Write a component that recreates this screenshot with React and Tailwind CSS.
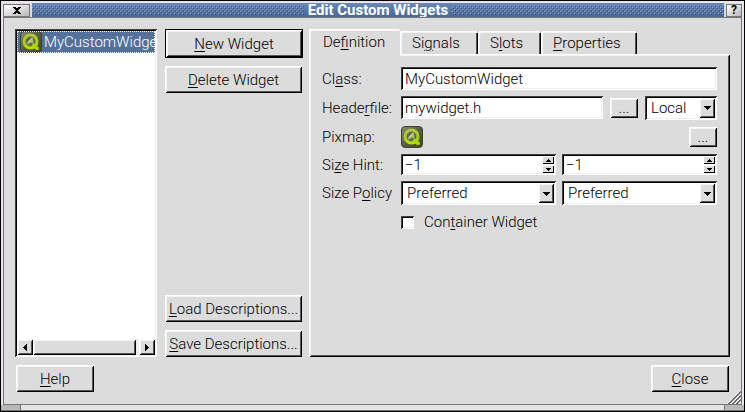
import React from "react";

const raised =
  "bg-[#dcdcdc] shadow-[inset_1px_1px_0_#ffffff,inset_-1px_-1px_0_#000000,inset_2px_2px_0_#f4f4f4,inset_-2px_-2px_0_#555555]";
const sunken =
  "bg-white shadow-[inset_1px_1px_0_#404040,inset_-1px_-1px_0_#ffffff,inset_2px_2px_0_#000000,inset_-2px_-2px_0_#f0f0f0]";

function Key({ text }) {
  const [before, key, after] = text.split("_");
  return (
    <span className="whitespace-pre">
      {before}
      <span className="underline underline-offset-2 decoration-1">{key}</span>
      {after}
    </span>
  );
}

function PushButton({ text, className = "" }) {
  return (
    <button type="button" className={`flex h-[27px] items-center justify-center ${raised} ${className}`}>
      <Key text={text} />
    </button>
  );
}

function DotsButton({ label }) {
  return (
    <button type="button" aria-label={label} className={`h-5 w-7 shrink-0 leading-5 ${raised}`}>
      ...
    </button>
  );
}

function QIcon() {
  return (
    <svg width="22" height="22" viewBox="0 0 22 22" className="shrink-0" aria-hidden="true">
      <defs>
        <linearGradient id="case" x1="0" y1="0" x2="1" y2="1">
          <stop offset="0" stopColor="#8a8a78" />
          <stop offset="0.5" stopColor="#5a5c44" />
          <stop offset="1" stopColor="#3f4818" />
        </linearGradient>
        <linearGradient id="lime" x1="0" y1="0" x2="0" y2="1">
          <stop offset="0" stopColor="#b4c83c" />
          <stop offset="0.6" stopColor="#a8d000" />
          <stop offset="1" stopColor="#b8e000" />
        </linearGradient>
      </defs>
      <rect x="0.5" y="0.5" width="21" height="21" rx="3.5" fill="url(#case)" stroke="#3f4230" />
      <circle cx="10.5" cy="10.5" r="6.5" fill="#66695a" stroke="url(#lime)" strokeWidth="3" />
      <path d="M13 12 L19 16.5 L18.5 19 L16 19 L12 15 Z" fill="#acd800" />
      <path d="M12.5 6 L13.5 12.5 L11 11.5 L7.5 13.5 L7 12 Z" fill="#a9c46a" />
      <path d="M12 7 L8 11.5" stroke="#d4e2b4" strokeWidth="1" />
    </svg>
  );
}

function Arrow({ dir }) {
  const shapes = {
    up: "M3 0h1v1h1v1h1v1H1V2h1V1h1z",
    down: "M0 0h7v1H6v1H5v1H4v1H3V3H2V2H1V1H0z",
    smallDown: "M1 0h5v1H5v1H4v1H3V2H2V1H1z",
    left: "M4 0v7H3V6H2V5H1V4H0V3h1V2h1V1h1V0z",
    right: "M0 0v7h1V6h1V5h1V4h1V3H3V2H2V1H1V0z",
  };
  const sideways = dir === "left" || dir === "right";
  return (
    <svg width="7" height="7" viewBox={sideways ? "-1 0 7 7" : "0 -2 7 7"} shapeRendering="crispEdges" className="shrink-0" aria-hidden="true">
      <path d={shapes[dir]} />
    </svg>
  );
}

function Combo({ id, value, label, className }) {
  return (
    <div className={`relative h-6 ${sunken} ${className}`}>
      <select id={id} aria-label={label} defaultValue={value} className="h-full w-full appearance-none bg-transparent pl-1.5 pr-5 outline-none">
        <option>{value}</option>
      </select>
      <span className={`pointer-events-none absolute inset-y-0.5 right-0.5 flex w-4 items-center justify-center ${raised}`}>
        <Arrow dir="down" />
      </span>
    </div>
  );
}

function Spin({ id, label }) {
  const step = "flex h-2 items-center justify-center bg-[#dcdcdc] shadow-[inset_1px_1px_0_#ffffff,inset_-1px_-1px_0_#000000]";
  return (
    <div className={`flex h-[21px] min-w-0 flex-1 p-0.5 ${sunken}`}>
      <input id={id} aria-label={label} type="text" defaultValue="−1" className="w-0 min-w-0 flex-1 bg-transparent pl-0.5 outline-none" />
      <div className="flex w-3 flex-col gap-px">
        <button type="button" aria-label="Increase" className={step}>
          <Arrow dir="up" />
        </button>
        <button type="button" aria-label="Decrease" className={step}>
          <Arrow dir="smallDown" />
        </button>
      </div>
    </div>
  );
}

function Texture({ id }) {
  return (
    <svg className="h-full w-0 flex-1" shapeRendering="crispEdges" aria-hidden="true">
      <defs>
        <pattern id={id} width="4" height="4" patternUnits="userSpaceOnUse">
          <rect x="0" y="0" width="1" height="1" fill="#86a4cf" />
          <rect x="1" y="1" width="1" height="1" fill="#38517a" />
          <rect x="2" y="2" width="1" height="1" fill="#86a4cf" />
          <rect x="3" y="3" width="1" height="1" fill="#38517a" />
        </pattern>
      </defs>
      <rect y="2" width="100%" height="10" fill={`url(#${id})`} />
    </svg>
  );
}

function TitleBar() {
  const cap = "flex h-[13px] items-center justify-center bg-linear-to-br from-white to-[#b8b8b8] border border-[#777777]";
  return (
    <header className="flex h-3.5 items-center gap-0.5">
      <button type="button" aria-label="Close window" className={`w-[27px] ${cap}`}>
        <svg width="8" height="7" viewBox="0 0 8 7" shapeRendering="crispEdges" aria-hidden="true">
          <path d="M0 0h3v1h2V0h3v1H7v1H6v1H5v1h1v1h1v1h1v1H5V6H3v1H0V6h1V5h1V4h1V3H2V2H1V1H0z" />
        </svg>
      </button>
      <div className="flex h-full flex-1 items-center gap-1 bg-linear-to-b from-[#6688bb] to-[#4a678f]">
        <Texture id="dots-left" />
        <h1 className="text-[15px] leading-[14px] font-bold text-white">Edit Custom Widgets</h1>
        <Texture id="dots-right" />
      </div>
      <button type="button" aria-label="What's this?" className={`w-4 font-bold text-[12px] leading-3 ${cap}`}>
        ?
      </button>
    </header>
  );
}

function WidgetList() {
  return (
    <div className={`flex w-[142px] shrink-0 flex-col p-0.5 ${sunken}`}>
      <ul role="listbox" aria-label="Custom widgets" className="flex-1 overflow-hidden">
        <li role="option" aria-selected="true" className="flex h-[22px] items-center gap-0.5 whitespace-nowrap bg-[#54719c] pl-[3px] text-white outline-1 -outline-offset-1 outline-dotted outline-white">
          <QIcon />
          MyCustomWidget
        </li>
      </ul>
      <div className="flex h-4 bg-[#ededed]">
        <button type="button" aria-label="Scroll left" className={`flex w-4 items-center justify-center ${raised}`}>
          <Arrow dir="left" />
        </button>
        <div className={`mr-[3px] flex-1 ${raised}`} />
        <button type="button" aria-label="Scroll right" className={`flex w-4 items-center justify-center ${raised}`}>
          <Arrow dir="right" />
        </button>
      </div>
    </div>
  );
}

function Tab({ text, active = false, className }) {
  const look = active
    ? "h-[27px] shadow-[inset_1px_1px_0_#ffffff,inset_2px_2px_0_#f4f4f4] z-10 -mb-0.5 pb-0.5"
    : "h-[23px] shadow-[inset_1px_1px_0_#ffffff,inset_2px_2px_0_#f4f4f4,inset_-1px_0_0_#000000,inset_-2px_0_0_#555555]";
  return (
    <button type="button" role="tab" aria-selected={active} className={`relative flex items-center bg-[#dcdcdc] rounded-t-xs ${look} ${className}`}>
      <Key text={text} />
    </button>
  );
}

function Definition() {
  return (
    <form className={`grid flex-1 grid-cols-[auto_minmax(0,1fr)] content-start items-center gap-x-[9px] gap-y-1.5 p-[13px] ${raised}`}>
      <label htmlFor="class"><Key text="Cl_a_ss:" /></label>
      <input id="class" type="text" defaultValue="MyCustomWidget" className={`h-[23px] w-full pl-1 outline-none ${sunken}`} />

      <label htmlFor="header"><Key text="Heade_r_file:" /></label>
      <div className="flex h-[23px] items-center gap-[7px]">
        <input id="header" type="text" defaultValue="mywidget.h" className={`h-full w-0 min-w-0 flex-1 pl-1 outline-none ${sunken}`} />
        <DotsButton label="Choose header file" />
        <Combo id="scope" label="Include scope" value="Local" className="w-[72px] shrink-0" />
      </div>

      <span>Pixmap:</span>
      <div className="flex h-[23px] items-center justify-between">
        <QIcon />
        <DotsButton label="Choose pixmap" />
      </div>

      <label htmlFor="hint-w"><Key text="Si_z_e Hint:" /></label>
      <div className="flex gap-1.5">
        <Spin id="hint-w" />
        <Spin id="hint-h" label="Size hint height" />
      </div>

      <label htmlFor="policy-h"><Key text="Size P_o_licy" /></label>
      <div className="flex gap-1.5">
        <Combo id="policy-h" value="Preferred" className="flex-1" />
        <Combo id="policy-v" label="Vertical size policy" value="Preferred" className="flex-1" />
      </div>

      <label className="col-start-2 flex h-[22px] items-center gap-2.5">
        <input type="checkbox" className={`size-[13px] appearance-none ${sunken}`} />
        <Key text="Con_t_ainer Widget" />
      </label>
    </form>
  );
}

function SizeGrip() {
  return (
    <svg width="14" height="14" viewBox="0 0 14 14" className="absolute right-0 bottom-0" aria-hidden="true">
      <path d="M0 14L14 0M4 14L14 4M8 14L14 8M12 14L14 12" stroke="#ffffff" />
      <path d="M1 14L14 1M2 14L14 2M5 14L14 5M6 14L14 6M9 14L14 9M10 14L14 10" stroke="#666666" />
    </svg>
  );
}

export default function App() {
  return (
    <main className="flex min-h-screen flex-col border border-black bg-[#dcdcdc] font-['Roboto','Liberation_Sans',sans-serif] text-[15px] leading-5 font-light text-black">
      <div className="flex flex-1 flex-col border-2 border-[#ece4ec] border-b-0">
        <TitleBar />
        <div className="relative flex flex-1 flex-col gap-2 border border-[#777777] px-[11px] pt-[11px] pb-3">
          <div className="flex flex-1 gap-[7px]">
            <WidgetList />
            <div className="flex w-[138px] shrink-0 flex-col gap-2 *:ml-px">
              <div className="-mr-px -ml-px flex border border-black">
                <PushButton text="_N_ew Widget" className="flex-1" />
              </div>
              <PushButton text="_D_elete Widget" />
              <PushButton text="_L_oad Descriptions..." className="mt-auto" />
              <PushButton text="_S_ave Descriptions..." />
            </div>
            <div className="flex min-w-0 flex-1 flex-col">
              <div role="tablist" className="flex items-end">
                <Tab text="De_f_inition" active className="w-[91px] pl-3.5" />
                <Tab text="Si_g_nals" className="w-[78px] pl-3" />
                <Tab text="S_l_ots" className="w-[63px] pl-3" />
                <Tab text="_P_roperties" className="w-24 pl-3" />
              </div>
              <Definition />
            </div>
          </div>
          <div className="flex justify-between px-px">
            <PushButton text="_H_elp" className="w-[78px]" />
            <PushButton text="_C_lose" className="w-[78px]" />
          </div>
          <SizeGrip />
        </div>
      </div>
      <div className="flex h-1.5 border-b border-[#777777] bg-[#e4e4e4]">
        <div className="w-5 border-r border-[#777777] bg-[#b8b8b8]" />
        <div className="flex-1" />
        <div className="w-5 border-l border-[#777777] bg-[#b8b8b8]" />
      </div>
    </main>
  );
}
